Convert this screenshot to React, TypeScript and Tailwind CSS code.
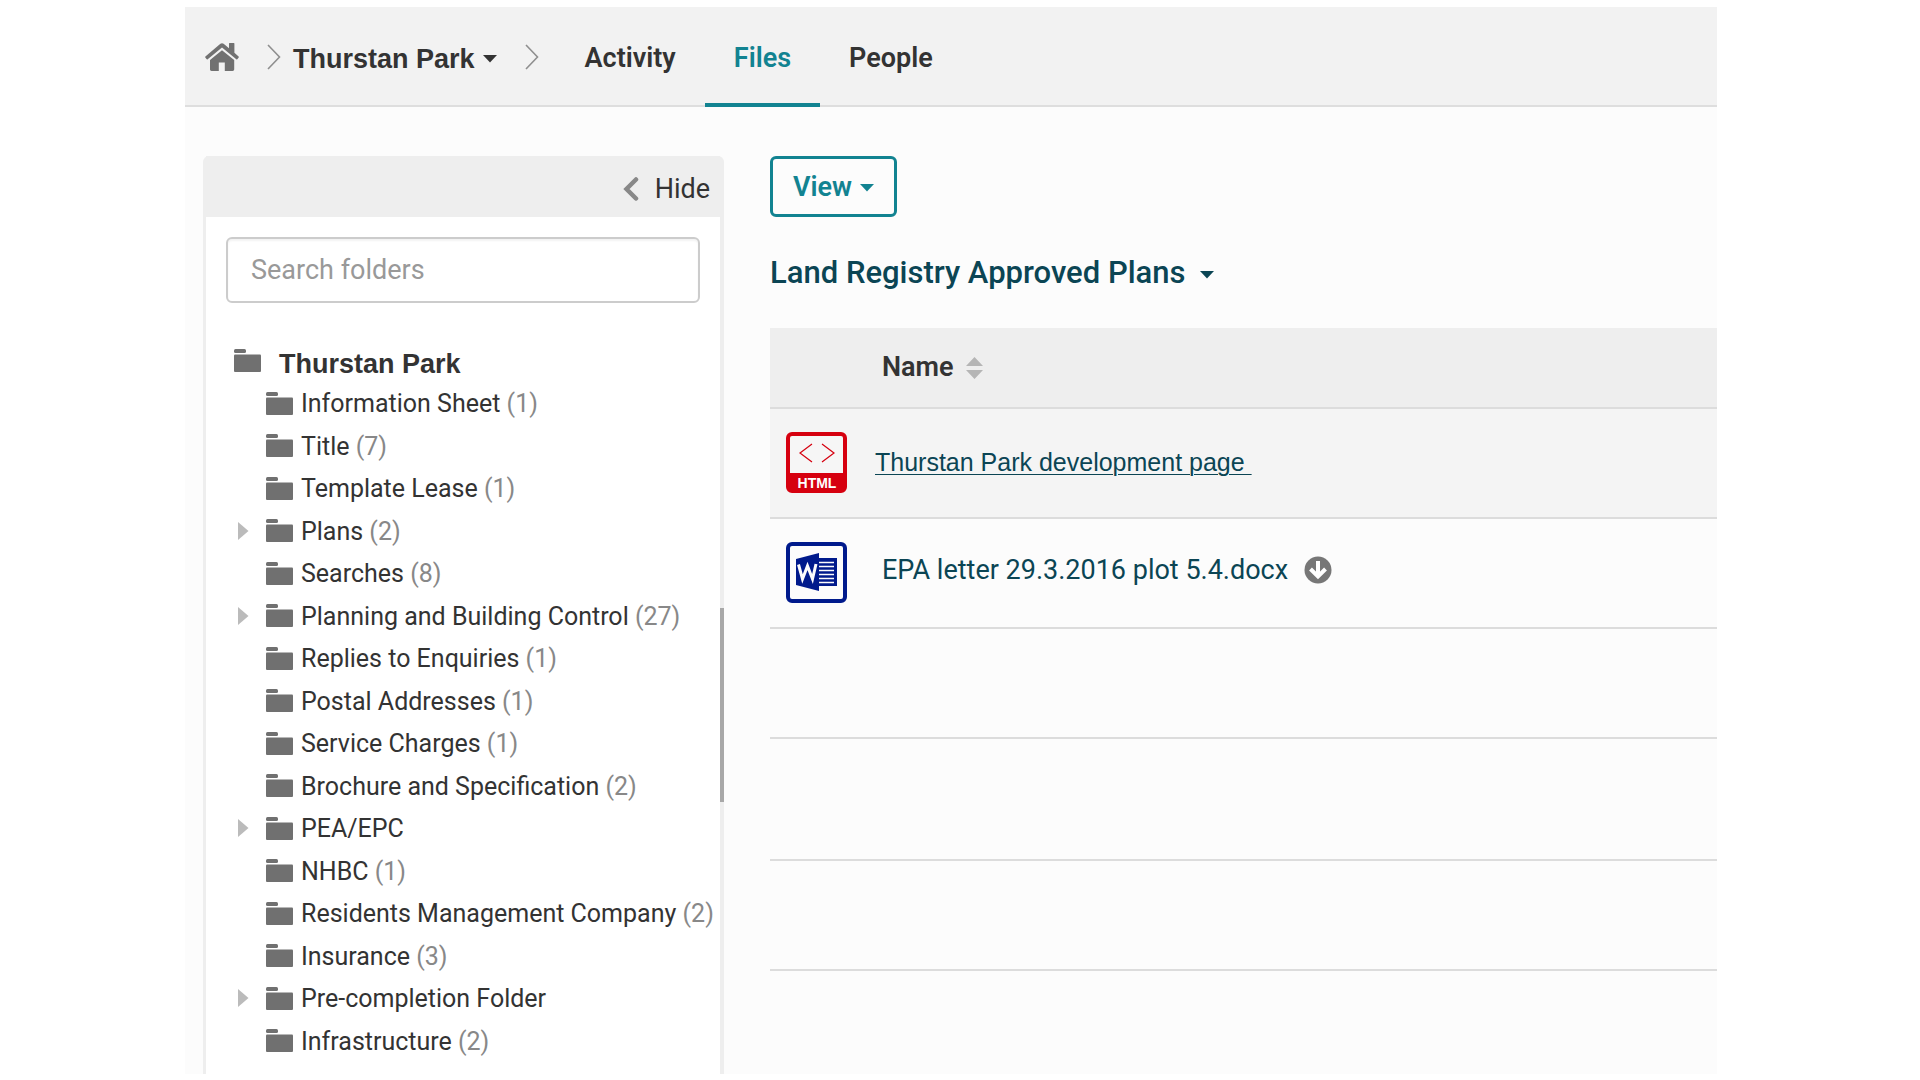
import React from "react";

type Folder = { name: string; count?: number; expandable?: boolean };

const folders: Folder[] = [
  { name: "Information Sheet", count: 1 },
  { name: "Title", count: 7 },
  { name: "Template Lease", count: 1 },
  { name: "Plans", count: 2, expandable: true },
  { name: "Searches", count: 8 },
  { name: "Planning and Building Control", count: 27, expandable: true },
  { name: "Replies to Enquiries", count: 1 },
  { name: "Postal Addresses", count: 1 },
  { name: "Service Charges", count: 1 },
  { name: "Brochure and Specification", count: 2 },
  { name: "PEA/EPC", expandable: true },
  { name: "NHBC", count: 1 },
  { name: "Residents Management Company", count: 2 },
  { name: "Insurance", count: 3 },
  { name: "Pre-completion Folder", expandable: true },
  { name: "Infrastructure", count: 2 },
];

function HomeIcon() {
  return (
    <svg width="34" height="28" viewBox="0 0 34 28" aria-hidden="true" className="shrink-0 fill-[#717171]">
      <path d="M17 7.2 5 17v9.3c0 1 .6 1.7 1.6 1.7h7.2v-8.6h6V28h7.8c1 0 1.6-.7 1.6-1.7V17z" />
      <path d="M15.4.8.4 13.4c-.4.4-.4.8-.1 1.2l1.2 1.5c.3.4.8.4 1.2.1L17 4.6l14.3 11.6c.4.3.9.3 1.2-.1l1.2-1.5c.3-.4.3-.8-.1-1.2L29.4 9.8V.6c0-.3-.2-.5-.5-.5h-4.400c-.3 0-.5.2-.5.5v4.600L18.600.8c-.9-.8-2.300-.8-3.200 0z" />
    </svg>
  );
}

function Separator() {
  return (
    <svg width="14" height="26" viewBox="0 0 14 26" aria-hidden="true" className="shrink-0">
      <path d="M1 1 12.500 13 1 25" fill="none" stroke="#8f8f8f" strokeWidth="1.600" />
    </svg>
  );
}

function Caret() {
  return (
    <svg width="14" height="8" viewBox="0 0 14 8" aria-hidden="true" className="shrink-0 fill-current">
      <path d="M0 0h14L7 7.500z" />
    </svg>
  );
}

function FolderIcon() {
  return (
    <svg width="27" height="23" viewBox="0 0 27 23" aria-hidden="true" className="shrink-0 fill-[#707070]">
      <rect x="0" y="0" width="12" height="4" rx="1.500" />
      <rect x="0" y="5.500" width="27" height="17.500" rx="1" />
    </svg>
  );
}

function HtmlIcon() {
  return (
    <svg width="61" height="61" viewBox="0 0 61 61" aria-hidden="true" className="block">
      <rect x="2" y="2" width="57" height="57" rx="4" fill="#f6f6f6" stroke="#d6000f" strokeWidth="4" />
      <path d="M1 41h59v14a5 5 0 0 1-5 5H6a5 5 0 0 1-5-5z" fill="#d6000f" />
      <path d="M26 12 14 21l12 9M36 12l12 9-12 9" fill="none" stroke="#d6000f" strokeWidth="1.200" />
      <text x="31" y="56" textAnchor="middle" fill="#fff" fontSize="14" fontWeight="700" fontFamily="Liberation Sans, sans-serif">
        HTML
      </text>
    </svg>
  );
}

function WordIcon() {
  return (
    <svg width="61" height="61" viewBox="0 0 61 61" aria-hidden="true" className="block">
      <rect x="2" y="2" width="57" height="57" rx="4" fill="#fcfcfc" stroke="#001a8c" strokeWidth="4" />
      <path d="M33 16h18v28H33z" fill="#001a8c" />
      <path d="M33 20.500h15M33 24.500h15M33 28.500h15M33 32.500h15M33 36.500h15M33 40.500h15" stroke="#fcfcfc" strokeWidth="1.600" />
      <path d="M10 17l23-6v38l-23-6z" fill="#001a8c" />
      <path d="M12.500 22.500 16.500 37 21.500 24 26.500 37 30 22" fill="none" stroke="#fcfcfc" strokeWidth="3" />
    </svg>
  );
}

function DownloadIcon() {
  return (
    <svg width="28" height="28" viewBox="0 0 28 28" aria-hidden="true" className="block">
      <circle cx="14" cy="14" r="13.500" fill="#777" />
      <path d="M14 5v15M6.500 13l7.500 7.500 7.500-7.500" fill="none" stroke="#fff" strokeWidth="4" />
    </svg>
  );
}

function Header() {
  const tab = "flex items-center px-[29px] pt-1.5 border-b-4";
  return (
    <header className="flex h-[100px] bg-[#f2f2f2] pl-5 shadow-[inset_0_-2px_0_#dedede]">
      <nav aria-label="Breadcrumb" className="flex items-center">
        <a href="#home" aria-label="Home">
          <HomeIcon />
        </a>
        <span className="ml-7 mr-3">
          <Separator />
        </span>
        <button type="button" className="flex items-center gap-2 pt-1 font-['Liberation_Sans',sans-serif] text-[27px] leading-8 font-bold">
          Thurstan Park
          <Caret />
        </button>
        <span className="ml-7 mr-[17px]">
          <Separator />
        </span>
      </nav>
      <nav aria-label="Sections" className="flex text-[27px] font-semibold">
        <a href="#activity" className={tab + " border-transparent"}>
          Activity
        </a>
        <a href="#files" aria-current="page" className={tab + " border-[#128391] text-[#128391]"}>
          Files
        </a>
        <a href="#people" className={tab + " border-transparent"}>
          People
        </a>
      </nav>
    </header>
  );
}

function Sidebar() {
  return (
    <aside className="relative flex w-[521px] shrink-0 flex-col rounded-t-md border-r-4 border-l-3 border-[#eee] bg-white">
      <div className="flex h-[61px] items-center justify-end bg-[#eee] pt-1 pr-2.5">
        <button type="button" className="flex items-center gap-4 text-[27px] leading-8">
          <svg width="16" height="24" viewBox="0 0 16 24" aria-hidden="true">
            <path d="M13 2.500 3.500 12l9.500 9.500" fill="none" stroke="#888" strokeWidth="4.500" strokeLinecap="round" />
          </svg>
          Hide
        </button>
      </div>
      <div className="px-5 pt-5">
        <input
          type="search"
          aria-label="Search folders"
          placeholder="Search folders"
          className="h-[66px] w-full rounded-md border-2 border-[#ccc] bg-white px-[23px] text-[27px] shadow-[inset_0_2px_2px_rgba(0,0,0,0.05)] placeholder:text-[#999]"
        />
      </div>
      <div className="pt-[39px] pl-7">
        <a href="#root" className="flex h-10 items-center gap-[18px] pt-1 font-['Liberation_Sans',sans-serif] text-[27px] font-bold">
          <span className="pb-2">
            <FolderIcon />
          </span>
          Thurstan Park
        </a>
        <ul className="grid min-h-[680px] auto-rows-fr text-[25px] leading-8">
          {folders.map((f) => (
            <li key={f.name} className="flex items-center pl-1">
              <span className="w-7 shrink-0">
                {f.expandable && (
                  <button type="button" aria-label={"Expand " + f.name} className="block">
                    <svg width="11" height="18" viewBox="0 0 11 18" aria-hidden="true" className="fill-[#bbb]">
                      <path d="M0 0 10.500 9 0 18z" />
                    </svg>
                  </button>
                )}
              </span>
              <a href={"#" + f.name} className="flex items-center gap-2 whitespace-nowrap">
                <FolderIcon />
                <span className="pt-0.5">
                  {f.name}
                  {f.count !== undefined && <span className="text-[#888]"> ({f.count})</span>}
                </span>
              </a>
            </li>
          ))}
        </ul>
      </div>
      <div aria-hidden="true" className="absolute top-[452px] -right-1 h-[194px] w-1 bg-[#a8a8a8]" />
    </aside>
  );
}

function Files() {
  const link = "text-[#0b4554]";
  return (
    <main className="min-w-0 flex-1">
      <button type="button" className="flex h-[61px] items-center gap-2 rounded-md border-[3px] border-[#128391] px-5 pt-0.5 text-[27px] font-semibold text-[#128391]">
        View
        <Caret />
      </button>
      <h1 className="mt-9 text-[31px] leading-10 font-medium text-[#0b4554]">
        <button type="button" className="flex items-center gap-[14px]">
          Land Registry Approved Plans
          <span className="flex pt-1">
            <Caret />
          </span>
        </button>
      </h1>
      <table className="mt-[35px] w-full border-collapse text-left">
        <thead>
          <tr className="h-[81px] bg-[#eee] shadow-[inset_0_-2px_0_#dcdcdc]">
            <th aria-label="Type" className="w-[105px]" />
            <th className="pb-0.5 pl-[7px] text-[27px] font-semibold">
              <button type="button" className="flex items-center gap-3">
                Name
                <svg width="17" height="22" viewBox="0 0 17 22" aria-hidden="true" className="fill-[#b5b5b5]">
                  <path d="M8.500 0 17 9H0zM0 13h17l-8.500 9z" />
                </svg>
              </button>
            </th>
          </tr>
        </thead>
        <tbody>
          <tr className="h-[110px] bg-[#f4f4f4] shadow-[inset_0_-2px_0_#dcdcdc]">
            <td className="pb-1 pl-4">
              <HtmlIcon />
            </td>
            <td className="pb-0.5 font-['Liberation_Sans',sans-serif] text-[25px] whitespace-pre">
              <a href="#development" className={link + " underline decoration-1 underline-offset-3"}>
                {"Thurstan Park development page "}
              </a>
            </td>
          </tr>
          <tr className="h-[110px] shadow-[inset_0_-2px_0_#dcdcdc]">
            <td className="pb-1 pl-4">
              <WordIcon />
            </td>
            <td className="pb-2 pl-[7px] text-[27px]">
              <div className="flex items-center gap-4">
                <a href="#letter" className={link}>
                  EPA letter 29.3.2016 plot 5.4.docx
                </a>
                <button type="button" aria-label="Download">
                  <DownloadIcon />
                </button>
              </div>
            </td>
          </tr>
          <tr className="h-[110px] shadow-[inset_0_-2px_0_#dcdcdc]">
            <td colSpan={2} />
          </tr>
          <tr className="h-[122px] shadow-[inset_0_-2px_0_#dcdcdc]">
            <td colSpan={2} />
          </tr>
          <tr className="h-[110px] shadow-[inset_0_-2px_0_#dcdcdc]">
            <td colSpan={2} />
          </tr>
        </tbody>
      </table>
    </main>
  );
}

export default function App() {
  return (
    <div className="flex min-h-screen bg-white pt-[7px] pr-[203px] pb-[6px] pl-[185px] font-[Roboto,sans-serif] text-[#333]">
      <div className="flex min-w-0 flex-1 flex-col bg-[#fcfcfc]">
        <Header />
        <div className="flex flex-1 gap-[46px] pt-[49px] pl-[18px]">
          <Sidebar />
          <Files />
        </div>
      </div>
    </div>
  );
}
